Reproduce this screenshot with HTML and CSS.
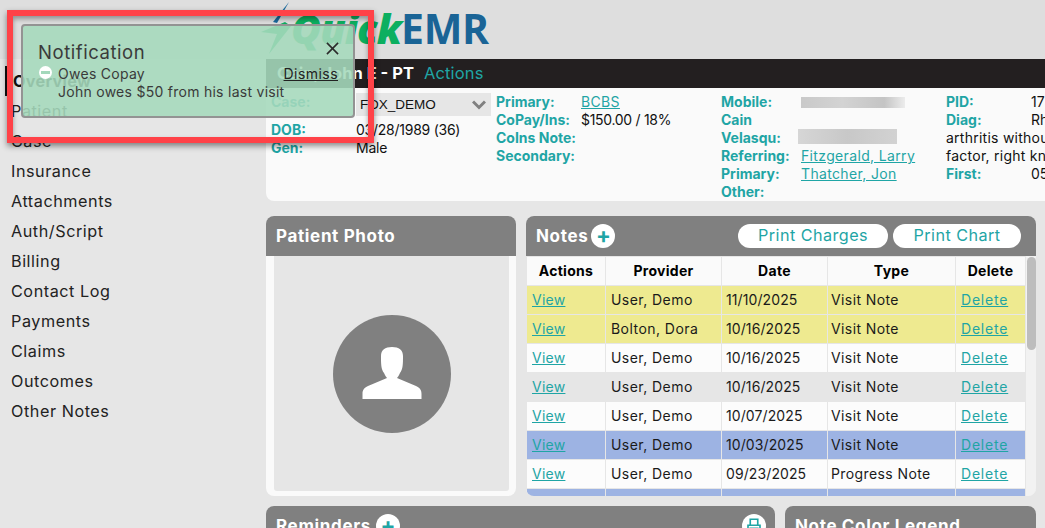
FILE: index.html
```html
<!DOCTYPE html>
<html lang="en">
<head>
<meta charset="utf-8">
<title>QuickEMR</title>
<link rel="stylesheet" href="styles.css">
</head>
<body>
<div class="app">
  <header class="topbar">
    <div class="logo">
      <svg class="bolt" viewBox="0 0 36 54" width="36" height="54"><path class="bolt-b" d="M28 0 L12 20 L16 21 Z"/><path class="bolt-g" d="M0 30 L24 20 L30 24 L8 52 L16 32 Z"/></svg>
      <span class="logo-quick">Quick</span><span class="logo-emr">EMR</span>
    </div>
  </header>
  <div class="layout">
    <nav class="sidebar">
      <a class="nav active">Overview</a>
      <a class="nav">Patient</a>
      <a class="nav">Case</a>
      <a class="nav">Insurance</a>
      <a class="nav">Attachments</a>
      <a class="nav">Auth/Script</a>
      <a class="nav">Billing</a>
      <a class="nav">Contact Log</a>
      <a class="nav">Payments</a>
      <a class="nav">Claims</a>
      <a class="nav">Outcomes</a>
      <a class="nav">Other Notes</a>
    </nav>
    <main class="main">
      <div class="patient-bar"><span class="pname">Cain, John E - PT</span><span class="actions">Actions</span></div>
      <section class="info">
        <div class="col col1">
          <div class="row case"><b>Case:</b><span class="select">FOX_DEMO<svg class="chev" viewBox="0 0 14 10" width="14" height="10"><path d="M1 1.5 L7 7.5 L13 1.5" fill="none" stroke="#808080" stroke-width="3"/></svg></span></div>
          <div class="row"><b>DOB:</b><span>03/28/1989 (36)</span></div>
          <div class="row"><b>Gen:</b><span>Male</span></div>
        </div>
        <div class="col col2">
          <div class="row"><b>Primary:</b><a>BCBS</a></div>
          <div class="row"><b>CoPay/Ins:</b><span>$150.00 / 18%</span></div>
          <div class="row"><b>CoIns Note:</b></div>
          <div class="row"><b>Secondary:</b></div>
        </div>
        <div class="col col3">
          <div class="row"><b>Mobile:</b><span class="blur b1"></span></div>
          <div class="row"><b>Cain</b></div>
          <div class="row"><b>Velasqu:</b><span class="blur b2"></span></div>
          <div class="row"><b>Referring:</b><a>Fitzgerald, Larry</a></div>
          <div class="row"><b>Primary:</b><a>Thatcher, Jon</a></div>
          <div class="row"><b>Other:</b></div>
        </div>
        <div class="col col4">
          <div class="row"><b>PID:</b><span>17</span></div>
          <div class="row"><b>Diag:</b><span>Rheumatoid</span></div>
          <div class="row wide">arthritis without rheumatoid</div>
          <div class="row wide">factor, right knee</div>
          <div class="row"><b>First:</b><span>05/12/2025</span></div>
        </div>
      </section>
      <div class="cards">
        <section class="card photo">
          <h2 class="card-head">Patient Photo</h2>
          <div class="photo-body">
            <svg viewBox="0 0 118 118" width="118" height="118"><circle cx="59" cy="59" r="59" fill="#808080"/><path fill="#fff" d="M59 32C52 32 48 35 48 41C48 49 48 54 51 58C52 60 53 62 54 63L35 71C31 73 29.5 75 29.5 79V84H88.5V79C88.5 75 87 73 83 71L64 63C65 62 66 60 67 58C70 54 70 49 70 41C70 35 66 32 59 32Z"/></svg>
          </div>
        </section>
        <section class="card notes">
          <div class="card-head">
            <h2>Notes</h2><span class="plus">+</span>
            <span class="btns"><span class="pill pill1">Print Charges</span><span class="pill pill2">Print Chart</span></span>
          </div>
          <div class="table-wrap">
            <table>
              <colgroup><col class="c1"><col class="c2"><col class="c3"><col class="c4"><col class="c5"></colgroup>
              <thead><tr><th>Actions</th><th>Provider</th><th>Date</th><th>Type</th><th>Delete</th></tr></thead>
              <tbody>
                <tr class="y"><td><a>View</a></td><td>User, Demo</td><td>11/10/2025</td><td>Visit Note</td><td><a>Delete</a></td></tr>
                <tr class="y"><td><a>View</a></td><td>Bolton, Dora</td><td>10/16/2025</td><td>Visit Note</td><td><a>Delete</a></td></tr>
                <tr><td><a>View</a></td><td>User, Demo</td><td>10/16/2025</td><td>Visit Note</td><td><a>Delete</a></td></tr>
                <tr class="g"><td><a>View</a></td><td>User, Demo</td><td>10/16/2025</td><td>Visit Note</td><td><a>Delete</a></td></tr>
                <tr><td><a>View</a></td><td>User, Demo</td><td>10/07/2025</td><td>Visit Note</td><td><a>Delete</a></td></tr>
                <tr class="b"><td><a>View</a></td><td>User, Demo</td><td>10/03/2025</td><td>Visit Note</td><td><a>Delete</a></td></tr>
                <tr><td><a>View</a></td><td>User, Demo</td><td>09/23/2025</td><td>Progress Note</td><td><a>Delete</a></td></tr>
                <tr class="b"><td><a>View</a></td><td>User, Demo</td><td>09/15/2025</td><td>Visit Note</td><td><a>Delete</a></td></tr>
              </tbody>
            </table>
            <div class="scroll"><div class="thumb"></div></div>
          </div>
        </section>
        <section class="card reminders">
          <div class="card-head"><h2>Reminders</h2><span class="plus">+</span>
            <span class="print"><svg viewBox="0 0 24 24" width="18" height="18"><path fill="none" stroke="#1fa5a5" stroke-width="2.2" d="M7 10V3h10v7M4 18v-7h16v7h-3M7 15h10v6H7z"/></svg></span>
          </div>
        </section>
        <section class="card legend"><h2 class="card-head">Note Color Legend</h2></section>
      </div>
    </main>
  </div>
</div>
<aside class="callout"></aside>
<aside class="toast">
  <div class="toast-title">Notification</div>
  <button class="toast-close" aria-label="Close"><svg viewBox="0 0 14 14" width="13" height="13"><path d="M1 1 L13 13 M13 1 L1 13" stroke="#2b2b2b" stroke-width="1.7" fill="none"/></svg></button>
  <div class="toast-body">
    <span class="minus"></span>
    <div class="toast-text"><div>Owes Copay</div><div>John owes $50 from his last visit</div></div>
    <a class="dismiss">Dismiss</a>
  </div>
</aside>
</body>
</html>
```
FILE: styles.css
```css
* { box-sizing: border-box; }
html, body { margin: 0; height: 528px; overflow: hidden; }
body { background: #e6e6e6; font-family: Inter, "Open Sans", sans-serif; font-size: 14px; color: #111; position: relative; }
h2 { margin: 0; font: inherit; }
.topbar { height: 59px; background: #dedede; padding-left: 261px; overflow: hidden; }
.logo { display: flex; align-items: center; height: 55px; font-family: "Open Sans", sans-serif; font-weight: 700; font-size: 41px; position: relative; }
.bolt { flex: none; margin-right: -6px; margin-top: 2px; }
.bolt-b { fill: #1a6a9e; }
.bolt-g { fill: #0caf60; }
.logo-quick { color: #0caf60; font-style: italic; font-weight: 800; letter-spacing: -1px; }
.logo-emr { color: #1a6496; letter-spacing: -0.3px; }
.layout { display: flex; height: 469px; }
.sidebar { width: 266px; flex: none; display: flex; flex-direction: column; padding-top: 7px; }
.nav { height: 30px; line-height: 30px; padding-left: 11px; font-size: 16.2px; color: #222; letter-spacing: .55px; }
.nav.active { font-weight: 700; border-left: 2px solid #111; margin-left: 5px; padding-left: 6px; color: #111; letter-spacing: .3px; }
.main { flex: 1; min-width: 0; }
.patient-bar { height: 29px; background: #231f20; color: #fff; display: flex; align-items: center; padding: 0 0 2px 11px; font-size: 16.5px; }
.pname { font-weight: 700; }
.actions { color: #1fa5a5; margin-left: 10px; letter-spacing: .15px; }
.info { height: 113px; background: #fafafa; border-bottom-left-radius: 8px; display: flex; padding: 5px 0 0 5px; overflow: hidden; font-size: 14px; line-height: 18px; white-space: nowrap; }
.col { flex: none; }
.col1 { width: 225px; }
.col2 { width: 225px; }
.col3 { width: 225px; }
.col4 { width: 99px; }
.row { display: flex; height: 18px; align-items: center; }
.row b { color: #1fa5a5; font-weight: 700; flex: none; }
.col1 b { width: 85px; }
.col2 b { width: 85px; }
.col3 b { width: 80px; }
.col4 b { width: 85px; }
.col1 .row span { letter-spacing: -.25px; }
.col2 .row span { letter-spacing: -.3px; }
.wide { letter-spacing: .25px; }
.info a, td a { color: #1fa5a5; text-decoration: underline; }
.info a { letter-spacing: .35px; }
.case { height: 23px; margin-bottom: 5px; }
.case b { align-self: flex-start; line-height: 18px; }
.col1 .row .select { width: 135px; height: 23px; background: #e6e6e6; display: flex; align-items: center; justify-content: space-between; padding: 0 5px 0 4px; font-family: "Liberation Sans", sans-serif; font-size: 13.5px; letter-spacing: 0; }
.blur { display: block; background: linear-gradient(90deg, #c9c9c9, #d3d3d3 40%, #c4c4c4 80%, #ececec); filter: blur(.6px); }
.b1 { width: 104px; height: 11px; }
.b2 { width: 99px; height: 15px; margin-left: -3px; margin-top: -4px; background: linear-gradient(90deg, #d6d6d6, #c8c8c8 50%, #d2d2d2); }
.cards { display: grid; grid-template-columns: 250px 10px 249px 10px 251px; grid-template-rows: 280px 60px; row-gap: 10px; margin-top: 15px; width: 770px; }
.card { background: #fafafa; border-radius: 8px; overflow: hidden; }
.card-head { display: flex; align-items: center; height: 40px; background: #808080; color: #fff; font-weight: 700; font-size: 17px; letter-spacing: .65px; padding-left: 10px; }
.photo { grid-column: 1; grid-row: 1; }
.photo-body { margin: 0 7px 5px 8px; height: 235px; background: #e6e6e6; display: flex; align-items: center; justify-content: center; border-radius: 0 0 3px 3px; }
.notes { grid-column: 3 / 6; grid-row: 1; }
.plus { width: 24px; height: 24px; border-radius: 50%; background: #fff; color: #1fa5a5; font-size: 22px; line-height: 23px; text-align: center; font-weight: 700; margin-left: 5px; letter-spacing: 0; }
.notes .plus { margin-left: 3px; }
.btns { margin-left: auto; display: flex; gap: 5px; padding-right: 15px; }
.pill { height: 24px; line-height: 23px; background: #fff; border-radius: 12px; color: #1fa5a5; font-weight: 400; font-size: 16.2px; letter-spacing: .45px; text-align: center; }
.pill1 { width: 150px; }
.pill2 { width: 128px; }
.table-wrap { display: flex; height: 240px; overflow: hidden; padding-left: 1px; background: #e6e6e6; }
table { width: 497px; flex: none; border-collapse: separate; border-spacing: 1px; table-layout: fixed; background: #e6e6e6; margin: 0 0 0 -1px; font-size: 14px; }
.c1 { width: 78px; } .c2 { width: 115px; } .c3 { width: 105px; } .c4 { width: 127px; } .c5 { width: 69px; }
th { height: 28px; background: #fafafa; color: #000; font-weight: 700; padding: 0 0 2px; text-align: center; letter-spacing: .3px; }
td { height: 28px; background: #fcfcfc; padding: 0 0 2px 5px; white-space: nowrap; color: #1a1a1a; letter-spacing: .45px; }
td:nth-child(1) { letter-spacing: .25px; }
td:nth-child(3) { padding-left: 4px; letter-spacing: .1px; }
td:nth-child(4) { padding-left: 3px; letter-spacing: .4px; }
td:last-child { padding-left: 5px; letter-spacing: .8px; }
tr.y td { background: #eeea90; }
tr.g td { background: #e6e6e6; }
tr.b td { background: #9db3e3; }
.scroll { flex: 1; background: #f2f2f2; padding-top: 1px; border-radius: 0 0 6px 0; }
.thumb { height: 93px; background: #bdbdbd; border-radius: 5px; width: 9px; margin-left: 1px; }
.reminders { grid-column: 1 / 4; grid-row: 2; }
.print { margin-left: auto; margin-right: 9px; width: 24px; height: 24px; border-radius: 50%; background: #fff; display: flex; align-items: center; justify-content: center; }
.legend { grid-column: 5; grid-row: 2; }
.callout { position: absolute; left: 7px; top: 10px; width: 367px; height: 133px; border: 6px solid #ff4248; box-shadow: 0 3px 6px rgba(0,0,0,.45), inset 0 3px 5px rgba(0,0,0,.35); }
.toast { position: absolute; left: 21px; top: 24px; width: 334px; height: 94px; background: rgba(165, 217, 188, .89); border: 2px solid #939393; border-radius: 4px; color: #3a3a3a; }
.toast-title { position: absolute; left: 15px; top: 15px; font-size: 18.5px; line-height: 22px; letter-spacing: .55px; }
.toast-close { position: absolute; right: 14px; top: 16px; padding: 0; border: 0; background: none; display: flex; }
.toast-body { position: absolute; left: 16px; top: 39px; right: 15px; display: flex; font-size: 14px; line-height: 18px; }
.minus { width: 13px; height: 13px; border-radius: 50%; background: #fff; position: relative; margin-top: 1px; flex: none; }
.minus::after { content: ""; position: absolute; left: 2px; right: 2px; top: 5px; height: 3px; background: #a3d8bb; }
.toast-text { margin-left: 6px; white-space: nowrap; letter-spacing: .27px; }
.dismiss { position: absolute; right: 0; top: 0; text-decoration: underline; color: #222; letter-spacing: .45px; }
```
